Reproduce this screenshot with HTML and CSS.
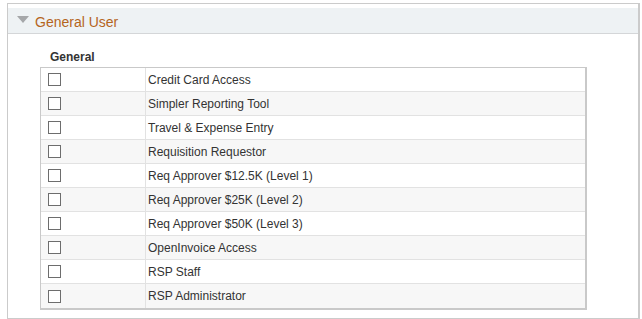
FILE: index.html
```html
<!DOCTYPE html>
<html lang="en">
<head>
    <meta charset="UTF-8">
    <meta name="viewport" content="width=device-width, initial-scale=1.0">
    <title>General User</title>
    <link rel="stylesheet" href="styles.css">
</head>
<body>
    <div class="group">
        <div class="group-header">
            <span class="arrow"></span>
            <h2 class="group-title">General User</h2>
        </div>

        <div class="group-body">
            <div class="section-label">General</div>
            <table class="roles">
                <tbody>
                    <tr><td class="check"><span class="box"></span></td><td>Credit Card Access</td></tr>
                    <tr><td class="check"><span class="box"></span></td><td>Simpler Reporting Tool</td></tr>
                    <tr><td class="check"><span class="box"></span></td><td>Travel &amp; Expense Entry</td></tr>
                    <tr><td class="check"><span class="box"></span></td><td>Requisition Requestor</td></tr>
                    <tr><td class="check"><span class="box"></span></td><td>Req Approver $12.5K (Level 1)</td></tr>
                    <tr><td class="check"><span class="box"></span></td><td>Req Approver $25K (Level 2)</td></tr>
                    <tr><td class="check"><span class="box"></span></td><td>Req Approver $50K (Level 3)</td></tr>
                    <tr><td class="check"><span class="box"></span></td><td>OpenInvoice Access</td></tr>
                    <tr><td class="check"><span class="box"></span></td><td>RSP Staff</td></tr>
                    <tr><td class="check"><span class="box"></span></td><td>RSP Administrator</td></tr>
                </tbody>
            </table>
        </div>
    </div>
</body>
</html>
```

FILE: styles.css
```css
body {
    font-family: "Liberation Sans", Arial, sans-serif;
    margin: 0;
    padding: 3px 2px 0 7px;
    background-color: #ffffff;
    color: #333333;
}

.group {
    border: 1px solid #cbcbcb;
    border-right-width: 2px;
    height: 316px;
    box-sizing: border-box;
    padding-top: 4px;
}

.group-header {
    display: flex;
    align-items: center;
    gap: 6px;
    height: 26px;
    box-sizing: border-box;
    padding: 3px 0 0 9px;
    background-color: #eef2f4;
    border-bottom: 1px solid #d4d6d8;
}

.arrow {
    width: 0;
    height: 0;
    border-left: 6px solid transparent;
    border-right: 6px solid transparent;
    border-top: 7px solid #a5a7a9;
    margin-top: -6px;
}

.group-title {
    margin: 0;
    font-size: 14px;
    font-weight: normal;
    color: #b5651d;
}

.group-body {
    padding: 15px 0 0 32px;
}

.section-label {
    font-size: 12px;
    font-weight: bold;
    line-height: 16px;
    margin-left: 10px;
    margin-bottom: 2px;
}

.roles {
    width: 547px;
    border-collapse: separate;
    border-spacing: 0;
    border: 1px solid #c9c9c9;
    border-right-width: 2px;
    border-bottom-width: 2px;
}

.roles td {
    height: 23px;
    padding: 0 0 0 2px;
    font-size: 12px;
    border-bottom: 1px solid #e2e2e2;
    vertical-align: middle;
}

.roles tr:last-child td {
    border-bottom: none;
    height: 24px;
}

.roles tr:nth-child(even) td {
    background-color: #f7f7f7;
}

.roles td.check {
    width: 97px;
    padding-left: 7px;
    border-right: 1px solid #e2e2e2;
}

.box {
    display: block;
    width: 11px;
    height: 11px;
    border: 1px solid #6d6d6d;
    background-color: #ffffff;
}
```
